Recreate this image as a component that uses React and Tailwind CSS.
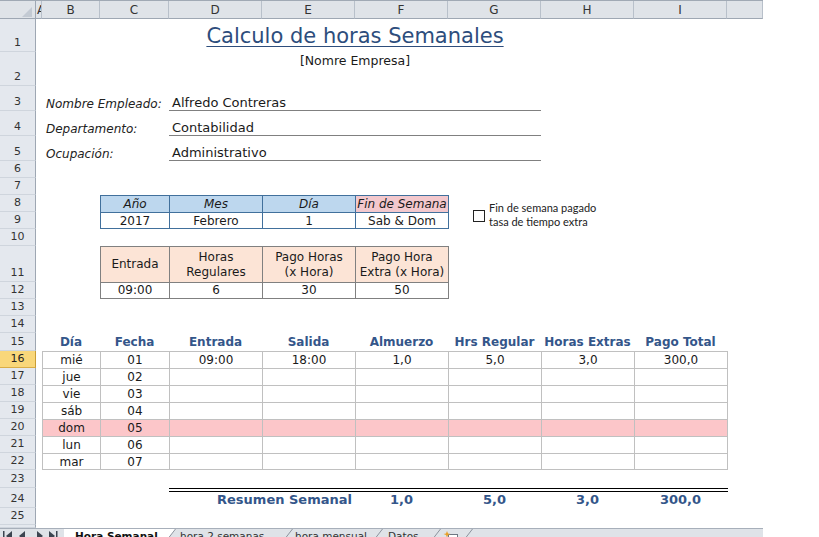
import React from "react";

function RowHeader({ n, hl }) {
  if (hl) {
    return (
      <div className="w-[36px] shrink-0 flex items-end justify-center border-r border-b border-r-[#c99d35] border-b-[#d9ad47] bg-[#f9d77a] text-[11px] leading-[16px] text-[#222]">
        {n}
      </div>
    );
  }
  return (
    <div className="w-[36px] shrink-0 flex items-end justify-center border-r border-b border-r-[#9ea7b3] border-b-[#cfd5dd] bg-[#e4e8ee] text-[11px] leading-[16px] text-[#333]">
      {n}
    </div>
  );
}

function Row({ h, n, hl, children }) {
  return (
    <div className={`flex shrink-0 ${h}`}>
      <RowHeader n={n} hl={hl} />
      <div className="flex flex-1 min-w-0 h-full">{children}</div>
    </div>
  );
}

function ColHeader() {
  const cols = [
    ["A", "w-[6px] justify-start pl-px overflow-hidden"],
    ["B", "w-[58px] justify-center"],
    ["C", "w-[69px] justify-center"],
    ["D", "w-[93px] justify-center"],
    ["E", "w-[93px] justify-center"],
    ["F", "w-[93px] justify-center"],
    ["G", "w-[93px] justify-center"],
    ["H", "w-[93px] justify-center"],
    ["I", "w-[93px] justify-center"],
    ["", "w-[36px] justify-center"],
  ];
  return (
    <div className="flex shrink-0 h-[19px] border-t border-[#a0a9b4] bg-[#dfe3e8] text-[12px] text-[#333]">
      <div className="w-[36px] shrink-0 border-r border-b border-[#9ea7b3] flex items-end justify-end pr-[3px] pb-[1px]">
        <svg width="10" height="10" viewBox="0 0 10 10">
          <polygon points="10,0 10,10 0,10" fill="#c3cad3" />
        </svg>
      </div>
      {cols.map(([l, w], i) => (
        <div
          key={i}
          className={`${w} shrink-0 h-full flex items-center leading-none border-b border-r border-b-[#9ea7b3] border-r-[#b8c0ca]`}
        >
          {l}
        </div>
      ))}
    </div>
  );
}

function InfoRow({ n, label, value }) {
  return (
    <Row h="h-[25px]" n={n}>
      <div className="w-[6px] shrink-0" />
      <div className="w-[127px] shrink-0 flex items-end pl-[4px] italic text-[12px] leading-[14px] text-[#222]">
        {label}
      </div>
      <div className="w-[372px] shrink-0 flex items-end pl-[3px] border-b border-[#808080] text-[13px] leading-[14px] text-[#1a1a1a]">
        {value}
      </div>
    </Row>
  );
}

const days = [
  { n: 16, d: "mié", f: "01", v: ["09:00", "18:00", "1,0", "5,0", "3,0", "300,0"], hl: true },
  { n: 17, d: "jue", f: "02" },
  { n: 18, d: "vie", f: "03" },
  { n: 19, d: "sáb", f: "04" },
  { n: 20, d: "dom", f: "05", pink: true },
  { n: 21, d: "lun", f: "06" },
  { n: 22, d: "mar", f: "07", last: true },
];

function DataRow({ n, d, f, v, hl, pink, last }) {
  const vals = v || ["", "", "", "", "", ""];
  const base = `shrink-0 h-full flex items-center justify-center border-l border-t border-[#c0c0c0] text-[12px] leading-[16px] ${last ? "border-b" : ""} ${pink ? "bg-[#fcc6c9]" : ""}`;
  return (
    <Row h="h-[17px]" n={n} hl={hl}>
      <div className="w-[6px] shrink-0" />
      <div className={`${base} w-[58px]`}>{d}</div>
      <div className={`${base} w-[69px]`}>{f}</div>
      <div className={`${base} w-[93px]`}>{vals[0]}</div>
      <div className={`${base} w-[93px]`}>{vals[1]}</div>
      <div className={`${base} w-[93px]`}>{vals[2]}</div>
      <div className={`${base} w-[93px]`}>{vals[3]}</div>
      <div className={`${base} w-[93px]`}>{vals[4]}</div>
      <div className={`${base} w-[94px] border-r`}>{vals[5]}</div>
    </Row>
  );
}

function Slash({ white }) {
  return (
    <svg width="8" height="9" viewBox="0 0 8 9" className="shrink-0">
      {white ? <polygon points="0,0 8,0 0,9" fill="#ffffff" /> : null}
      <line x1="0.5" y1="9" x2="7.5" y2="0" stroke="#8b939d" strokeWidth="1" />
    </svg>
  );
}

function TabBar() {
  return (
    <div className="flex shrink-0 h-[9px] overflow-hidden bg-[#dfe3e8] border-t border-[#a7afba] text-[10.5px] leading-[12px] text-[#333]">
      <div className="w-[64px] shrink-0">
        <svg width="64" height="8" viewBox="0 0 64 8">
          <rect x="3" y="2" width="1.5" height="10" fill="#3c4550" />
          <polygon points="12,2 12,12 6,7" fill="#3c4550" />
          <polygon points="25,2 25,12 19,7" fill="#3c4550" />
          <polygon points="37,2 37,12 43,7" fill="#3c4550" />
          <polygon points="49,2 49,12 55,7" fill="#3c4550" />
          <rect x="56" y="2" width="1.5" height="10" fill="#3c4550" />
        </svg>
      </div>
      <div className="w-[104px] shrink-0 h-full bg-white pl-[11px] pt-[1px] font-bold text-[#111] whitespace-nowrap">
        Hora Semanal
      </div>
      <Slash white />
      <div className="w-[109px] shrink-0 pl-[4px] pt-[1px] whitespace-nowrap overflow-hidden">hora 2 semanas</div>
      <Slash />
      <div className="w-[82px] shrink-0 pl-[2px] pt-[1px] whitespace-nowrap">hora mensual</div>
      <Slash />
      <div className="w-[50px] shrink-0 pl-[5px] pt-[1px] whitespace-nowrap">Datos</div>
      <Slash />
      <div className="w-[24px] shrink-0 pl-[2px] pt-[2px]">
        <svg width="16" height="10" viewBox="0 0 16 10">
          <rect x="5.5" y="3.5" width="9" height="9" fill="#ffffff" stroke="#6d7782" />
          <path d="M4 0 L5 2.5 L7.5 3 L5 4 L4 6.5 L3 4 L0.5 3 L3 2.5 Z" fill="#e8a028" />
        </svg>
      </div>
      <Slash />
    </div>
  );
}

export default function App() {
  const hdr = "shrink-0 h-full flex items-center justify-center font-bold text-[12px] leading-[16px] text-[#34568a] whitespace-nowrap";
  const t1 = "shrink-0 h-full flex items-center justify-center border-l border-t border-[#41709c] text-[12px] leading-[16px]";
  const t2 = "shrink-0 h-full flex items-center justify-center text-center border-l border-t border-[#808080] text-[12px] leading-[15px]";
  const sum = "shrink-0 h-full flex items-center justify-center font-bold text-[13px] leading-[16px] text-[#34568a]";
  return (
    <div className="relative w-[819px] h-[537px] bg-white overflow-hidden font-['DejaVu_Sans',sans-serif] text-[#1a1a1a]">
      <div className="w-[763px] h-[537px] flex flex-col">
        <ColHeader />

        <Row h="h-[33px]" n={1}>
          <div className="w-[133px] shrink-0" />
          <div className="w-[372px] shrink-0 flex items-end justify-center pb-[4px]">
            <span className="text-[21px] leading-[24px] text-[#2d4d7c] underline decoration-1 underline-offset-[3px] whitespace-nowrap">
              Calculo de horas Semanales
            </span>
          </div>
        </Row>

        <Row h="h-[34px]" n={2}>
          <div className="w-[133px] shrink-0" />
          <div className="w-[372px] shrink-0 flex items-start justify-center pt-[1px] text-[12.5px] leading-[16px] text-[#1a1a1a]">
            [Nomre Empresa]
          </div>
        </Row>

        <InfoRow n={3} label="Nombre Empleado:" value="Alfredo Contreras" />
        <InfoRow n={4} label="Departamento:" value="Contabilidad" />
        <InfoRow n={5} label="Ocupación:" value="Administrativo" />

        <Row h="h-[17px]" n={6} />
        <Row h="h-[17px]" n={7} />

        <Row h="h-[17px]" n={8}>
          <div className="w-[64px] shrink-0" />
          <div className={`${t1} w-[69px] bg-[#bdd7ee] italic`}>Año</div>
          <div className={`${t1} w-[93px] bg-[#bdd7ee] italic`}>Mes</div>
          <div className={`${t1} w-[93px] bg-[#bdd7ee] italic`}>Día</div>
          <div className={`${t1} w-[94px] border-r bg-[#f3c8cd] italic`}>Fin de Semana</div>
        </Row>
        <Row h="h-[17px]" n={9}>
          <div className="w-[64px] shrink-0" />
          <div className={`${t1} w-[69px] border-b`}>2017</div>
          <div className={`${t1} w-[93px] border-b`}>Febrero</div>
          <div className={`${t1} w-[93px] border-b`}>1</div>
          <div className={`${t1} w-[94px] border-b border-r`}>Sab &amp; Dom</div>
        </Row>

        <Row h="h-[17px]" n={10} />

        <Row h="h-[36px]" n={11}>
          <div className="w-[64px] shrink-0" />
          <div className={`${t2} w-[69px] bg-[#fce4d6]`}>Entrada</div>
          <div className={`${t2} w-[93px] bg-[#fce4d6]`}>Horas<br />Regulares</div>
          <div className={`${t2} w-[93px] bg-[#fce4d6]`}>Pago Horas<br />(x Hora)</div>
          <div className={`${t2} w-[94px] border-r bg-[#fce4d6] whitespace-nowrap`}>Pago Hora<br />Extra (x Hora)</div>
        </Row>
        <Row h="h-[17px]" n={12}>
          <div className="w-[64px] shrink-0" />
          <div className={`${t2} w-[69px] border-b`}>09:00</div>
          <div className={`${t2} w-[93px] border-b`}>6</div>
          <div className={`${t2} w-[93px] border-b`}>30</div>
          <div className={`${t2} w-[94px] border-b border-r`}>50</div>
        </Row>

        <Row h="h-[17px]" n={13} />
        <Row h="h-[17px]" n={14} />

        <Row h="h-[18px]" n={15}>
          <div className="w-[6px] shrink-0" />
          <div className={`${hdr} w-[58px]`}>Día</div>
          <div className={`${hdr} w-[69px]`}>Fecha</div>
          <div className={`${hdr} w-[93px]`}>Entrada</div>
          <div className={`${hdr} w-[93px]`}>Salida</div>
          <div className={`${hdr} w-[93px]`}>Almuerzo</div>
          <div className={`${hdr} w-[93px]`}>Hrs Regular</div>
          <div className={`${hdr} w-[93px]`}>Horas Extras</div>
          <div className={`${hdr} w-[93px]`}>Pago Total</div>
        </Row>

        {days.map((d) => (
          <DataRow key={d.n} {...d} />
        ))}

        <Row h="h-[18px]" n={23} />

        <Row h="h-[20px]" n={24}>
          <div className="w-[133px] shrink-0" />
          <div className="w-[559px] shrink-0 flex flex-col">
            <div className="h-[4px] shrink-0 border-y border-black" />
            <div className="flex flex-1">
              <div className={`${sum} w-[186px] justify-end pr-[3px] whitespace-nowrap`}>Resumen Semanal</div>
              <div className={`${sum} w-[93px]`}>1,0</div>
              <div className={`${sum} w-[93px]`}>5,0</div>
              <div className={`${sum} w-[93px]`}>3,0</div>
              <div className={`${sum} w-[93px]`}>300,0</div>
            </div>
          </div>
        </Row>

        <Row h="h-[17px]" n={25} />
        <Row h="h-[3px]" n="" />

        <TabBar />
      </div>

      <div className="absolute left-[473px] top-[210px] w-[12px] h-[12px] border border-[#222] bg-white" />
      <div className="absolute left-[489px] top-[201px] font-['Lato',sans-serif] text-[11px] leading-[14px] text-[#222] whitespace-nowrap">
        Fin de semana pagado
        <br />
        tasa de tiempo extra
      </div>
    </div>
  );
}
